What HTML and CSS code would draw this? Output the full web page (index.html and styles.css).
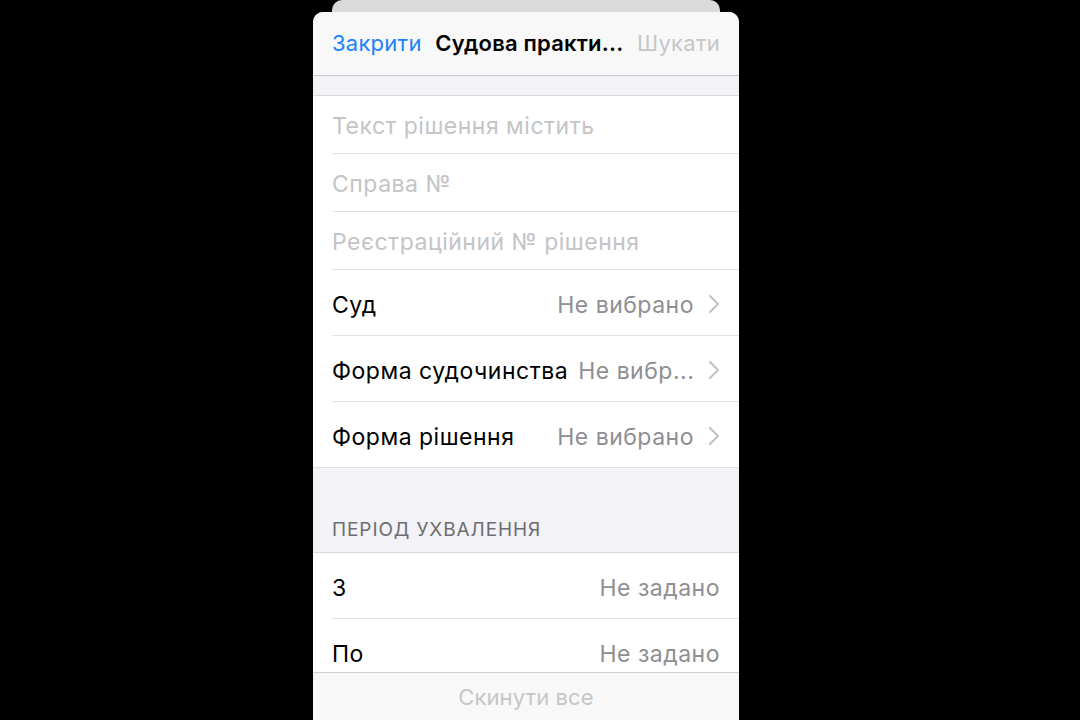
FILE: index.html
```html
<!DOCTYPE html>
<html lang="uk">
<head>
<meta charset="utf-8">
<title>Судова практика</title>
<link rel="stylesheet" href="styles.css">
</head>
<body>
<div class="phone">
  <div class="backcard"></div>
  <div class="sheet">
    <header class="nav">
      <span class="nav-btn nav-close">Закрити</span>
      <span class="nav-title">Судова практи...</span>
      <span class="nav-btn nav-search">Шукати</span>
    </header>
    <div class="content">
      <div class="spacer"></div>
      <div class="group">
        <div class="row field"><span class="placeholder">Текст рішення містить</span></div>
        <div class="row field"><span class="placeholder">Справа №</span></div>
        <div class="row field"><span class="placeholder">Реєстраційний № рішення</span></div>
        <div class="row pick">
          <span class="label">Суд</span>
          <span class="value">Не вибрано</span>
          <svg class="chev" width="12" height="20" viewBox="0 0 12 20"><path d="M2 2 L10 10 L2 18" fill="none" stroke="#c4c4c7" stroke-width="2.2" stroke-linecap="round" stroke-linejoin="round"/></svg>
        </div>
        <div class="row pick">
          <span class="label">Форма судочинства</span>
          <span class="value">Не вибр...</span>
          <svg class="chev" width="12" height="20" viewBox="0 0 12 20"><path d="M2 2 L10 10 L2 18" fill="none" stroke="#c4c4c7" stroke-width="2.2" stroke-linecap="round" stroke-linejoin="round"/></svg>
        </div>
        <div class="row pick last">
          <span class="label">Форма рішення</span>
          <span class="value">Не вибрано</span>
          <svg class="chev" width="12" height="20" viewBox="0 0 12 20"><path d="M2 2 L10 10 L2 18" fill="none" stroke="#c4c4c7" stroke-width="2.2" stroke-linecap="round" stroke-linejoin="round"/></svg>
        </div>
      </div>
      <div class="section-head">ПЕРІОД УХВАЛЕННЯ</div>
      <div class="group group-top">
        <div class="row pick">
          <span class="label">З</span>
          <span class="value">Не задано</span>
        </div>
        <div class="row pick last">
          <span class="label">По</span>
          <span class="value">Не задано</span>
        </div>
      </div>
    </div>
    <footer class="toolbar">Скинути все</footer>
  </div>
</div>
</body>
</html>
```

FILE: styles.css
```css
* { box-sizing: border-box; }
html, body { margin: 0; padding: 0; background: #000; }
body {
  width: 1080px;
  height: 720px;
  overflow: hidden;
  display: flex;
  justify-content: flex-start;
  padding-left: 313px;
  font-family: "Inter", "Noto Sans", sans-serif;
  -webkit-font-smoothing: antialiased;
}
.phone {
  width: 426px;
  height: 720px;
  display: flex;
  flex-direction: column;
}
.backcard {
  height: 12px;
  margin: 0 19px;
  background: #dadada;
  border-radius: 10px 10px 0 0;
  flex: none;
}
.sheet {
  position: relative;
  flex: 1;
  background: #f2f2f7;
  border-radius: 10px 10px 0 0;
  overflow: hidden;
  display: flex;
  flex-direction: column;
}
.nav {
  height: 64px;
  flex: none;
  background: #f8f8f8;
  border-bottom: 1px solid #c8c8cc;
  display: flex;
  align-items: center;
  justify-content: space-between;
  padding: 0 19px 2px;
  font-size: 22px;
  letter-spacing: 0.25px;
}
.nav-close { color: #1a82fb; }
.nav-title { color: #000; font-weight: 600; letter-spacing: 0.2px; }
.nav-search { color: #c6c6c8; }
.content { flex: 1; }
.spacer { height: 20px; border-bottom: 1px solid #d8d8dc; }
.group {
  background: #fff;
  border-bottom: 1px solid #e0e0e3;
}
.group-top { border-top: 1px solid #d8d8dc; }
.row {
  display: flex;
  align-items: center;
  margin-left: 19px;
  padding-right: 19px;
  border-bottom: 1px solid #e2e2e5;
  font-size: 23px;
  letter-spacing: 0.5px;
}
.row.last { border-bottom: none; }
.field { height: 58px; padding-top: 3px; }
.pick { height: 66px; padding-top: 4px; }
.group .row.pick.last { height: 65px; }
.placeholder { color: #c4c4c7; }
.label { color: #000; flex: none; }
.value {
  color: #8e8e93;
  margin-left: auto;
  padding-left: 10px;
  white-space: nowrap;
}
.chev { margin-left: 14px; flex: none; margin-top: -2px; }
.section-head {
  height: 84px;
  display: flex;
  align-items: flex-end;
  padding: 0 19px 11px;
  color: #6d6d72;
  font-size: 19px;
  letter-spacing: 0.9px;
}
.toolbar {
  position: absolute;
  left: 0;
  right: 0;
  bottom: 0;
  height: 48px;
  background: rgba(248, 248, 248, 0.97);
  border-top: 1px solid #d0d0d4;
  display: flex;
  align-items: center;
  justify-content: center;
  color: #c6c6c8;
  font-size: 22px;
  letter-spacing: 0.1px;
}
```
